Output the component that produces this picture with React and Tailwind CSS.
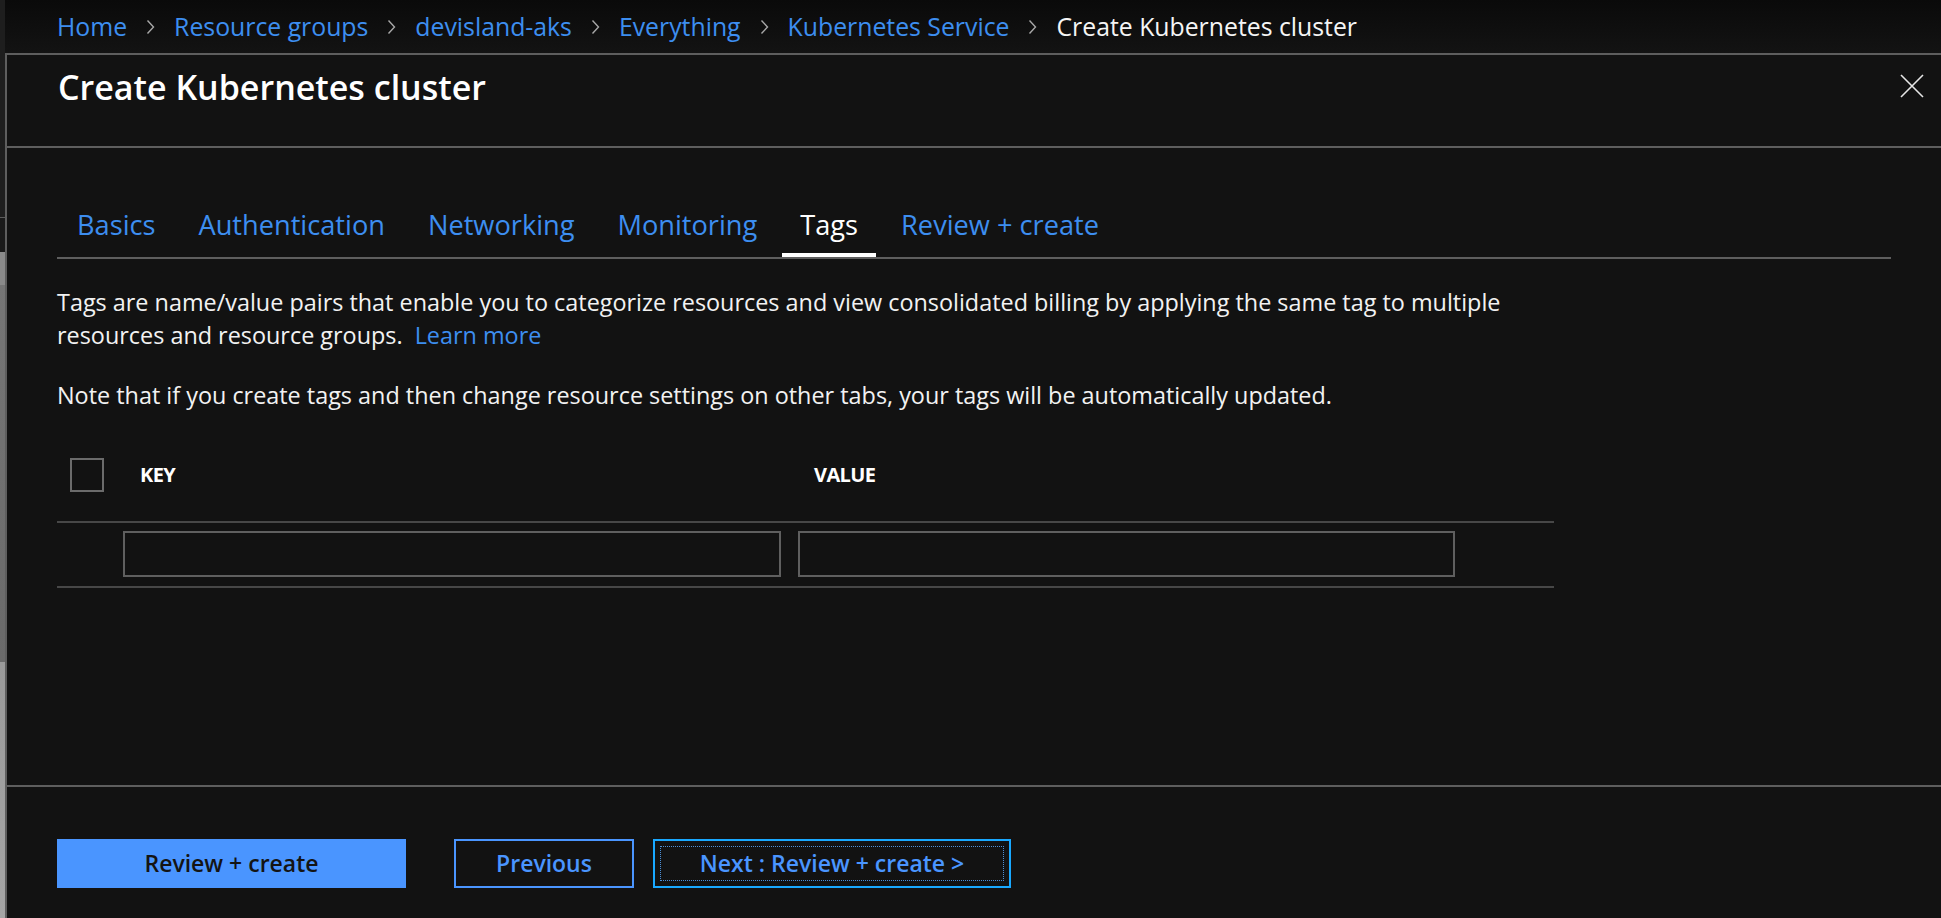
import React from 'react';

const crumbs = ['Home', 'Resource groups', 'devisland-aks', 'Everything', 'Kubernetes Service'];
const tabs = ['Basics', 'Authentication', 'Networking', 'Monitoring', 'Tags', 'Review + create'];

function Chevron() {
    return (
        <svg width="9" height="16" viewBox="0 0 9 16" className="shrink-0">
            <polyline points="1.5,1.5 7.5,8 1.5,14.5" fill="none" stroke="#a8a8a8" strokeWidth="1.4" />
        </svg>
    );
}

function App() {
    return (
        <div className="w-full h-[918px] bg-[#121212] flex overflow-hidden font-['Open_Sans',sans-serif] text-[#f2f2f2]">
            {/* sliver of the page behind the blade */}
            <div className="w-[5px] shrink-0 flex flex-col">
                <div className="h-[218px] bg-[#1e1e1e] border-b border-[#5c5c5c]"></div>
                <div className="h-[34px] bg-[#1a1a1a]"></div>
                <div className="h-[33px] bg-[#8a8a8a]"></div>
                <div className="h-[377px] bg-gradient-to-b from-[#767676] to-[#6a6a6a]"></div>
                <div className="flex-1 bg-gradient-to-b from-[#9a9a9a] to-[#a5a5a5]"></div>
            </div>

            <div className="flex-1 flex flex-col min-w-0">
                <nav className="h-[53px] shrink-0 flex items-center gap-[19px] pl-[52px] text-[24.8px] bg-gradient-to-b from-[#0a0a0a] to-[#131313]">
                    {crumbs.map((c) => (
                        <React.Fragment key={c}>
                            <span className="text-[#3d8ef0] whitespace-nowrap">{c}</span>
                            <Chevron />
                        </React.Fragment>
                    ))}
                    <span className="text-[#f5f5f5] whitespace-nowrap">Create Kubernetes cluster</span>
                </nav>

                <div className="flex-1 flex flex-col border-t-2 border-l-2 border-[#5e5e5e]">
                    <header className="h-[93px] shrink-0 flex items-start justify-between border-b-2 border-[#5e5e5e] pl-[51px] pr-[17px] pt-[12px]">
                        <h1 className="text-[34px] leading-[40px] font-semibold text-white">Create Kubernetes cluster</h1>
                        <button className="w-[24px] h-[24px] mt-[7px]">
                            <svg width="24" height="24" viewBox="0 0 24 24">
                                <path d="M1 1 L23 23 M23 1 L1 23" stroke="#e6e6e6" strokeWidth="1.6" fill="none" />
                            </svg>
                        </button>
                    </header>

                    <main className="flex-1 flex flex-col pl-[50px] pr-[50px] pt-[49px]">
                        <div className="flex gap-[7px] pl-[2px] border-b-2 border-[#5e5e5e]">
                            {tabs.map((t) => (
                                <div
                                    key={t}
                                    className={
                                        t === 'Tags'
                                            ? 'h-[60px] px-[18px] flex items-center border-b-4 border-white text-[27.2px] text-white'
                                            : 'h-[60px] px-[18px] flex items-center border-b-4 border-transparent text-[27.2px] text-[#3d8ef0]'
                                    }
                                >
                                    {t}
                                </div>
                            ))}
                        </div>

                        <p className="mt-[27px] text-[23.4px] leading-[33px]">
                            <span className="block whitespace-nowrap">
                                Tags are name/value pairs that enable you to categorize resources and view consolidated billing by applying the same tag to multiple
                            </span>
                            <span className="block whitespace-nowrap">
                                resources and resource groups.<span className="ml-[12px] text-[#3d8ef0]">Learn more</span>
                            </span>
                        </p>
                        <p className="mt-[27px] text-[23.4px] leading-[33px] whitespace-nowrap">
                            Note that if you create tags and then change resource settings on other tabs, your tags will be automatically updated.
                        </p>

                        <div className="mt-[30px] w-[1497px]">
                            <div className="h-[81px] pb-[13px] flex items-center border-b-2 border-[#474747]">
                                <div className="w-[66px] shrink-0 pl-[13px]">
                                    <div className="w-[34px] h-[34px] border-2 border-[#6b6b6b]"></div>
                                </div>
                                <div className="w-[675px] shrink-0 pl-[17px] text-[20px] font-bold tracking-[-0.6px] text-white">KEY</div>
                                <div className="flex-1 pl-[16px] text-[20px] font-bold tracking-[-0.6px] text-white">VALUE</div>
                            </div>
                            <div className="flex pt-[8px] pb-[9px] border-b-2 border-[#474747]">
                                <div className="w-[66px] shrink-0"></div>
                                <div className="w-[675px] shrink-0">
                                    <input className="w-[658px] h-[46px] border-2 border-[#5f5f5f] bg-transparent outline-none" />
                                </div>
                                <div className="flex-1">
                                    <input className="w-[657px] h-[46px] border-2 border-[#5f5f5f] bg-transparent outline-none" />
                                </div>
                            </div>
                        </div>
                    </main>

                    <footer className="h-[133px] shrink-0 border-t-2 border-[#5e5e5e] pl-[50px] pt-[52px] flex items-start">
                        <button className="w-[349px] h-[49px] bg-[#4a95ff] text-[#141414] text-[23px] font-semibold">
                            Review + create
                        </button>
                        <button className="ml-[48px] w-[180px] h-[49px] border-2 border-[#4a95ff] text-[#4a95ff] text-[23px] font-semibold">
                            Previous
                        </button>
                        <button className="relative ml-[19px] w-[358px] h-[49px] border-2 border-[#19a8ff] text-[#4a95ff] text-[23px] font-semibold">
                            <span className="absolute inset-[5px] border border-dotted border-[#4d8fd6]"></span>
                            Next : Review + create &gt;
                        </button>
                    </footer>
                </div>
            </div>
        </div>
    );
}

export default App;
